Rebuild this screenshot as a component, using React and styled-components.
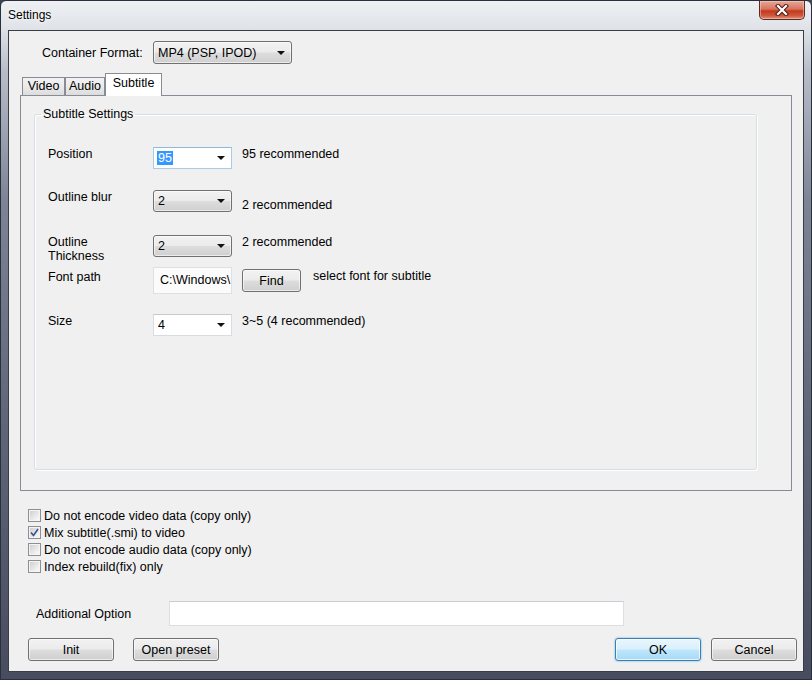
import React from 'react';
import styled, { createGlobalStyle, css } from 'styled-components';

const GlobalStyle = createGlobalStyle`
  html, body {
    margin: 0;
    padding: 0;
    background: #3d4352;
  }
  body {
    font-family: "Liberation Sans", Arial, sans-serif;
    font-size: 12.5px;
    color: #000;
  }
`;

const Window = styled.div`
  width: 812px;
  height: 680px;
  box-sizing: border-box;
  display: flex;
  flex-direction: column;
  border: 1px solid #2a2f3b;
  border-radius: 6px 6px 0 0;
  background: linear-gradient(
    180deg,
    #eef0f3 0px,
    #dfe3e8 28px,
    #b7bdc8 70px,
    #7d8496 200px,
    #5f6678 420px,
    #474d5e 100%
  );
  overflow: hidden;
`;

const TitleBar = styled.div`
  height: 29px;
  display: flex;
  align-items: flex-start;
  padding-left: 7px;
  flex-shrink: 0;
`;

const Title = styled.div`
  margin-top: 7px;
  font-size: 12px;
  color: #000;
  text-shadow: 0 0 6px #fff, 0 0 3px #fff;
`;

const CloseButton = styled.div`
  margin-left: auto;
  margin-right: 6px;
  width: 46px;
  height: 19px;
  box-sizing: border-box;
  border: 1px solid #5a2a24;
  border-top: none;
  border-radius: 0 0 5px 5px;
  background: linear-gradient(
    180deg,
    #e8a796 0%,
    #d9735d 45%,
    #c2391f 55%,
    #cf5638 80%,
    #e0917c 100%
  );
  box-shadow: inset 0 0 0 1px rgba(255, 220, 210, 0.45);
  display: flex;
  align-items: center;
  justify-content: center;
`;

const Client = styled.div`
  flex: 1;
  margin: 0 7px 7px 7px;
  border: 1px solid #3a3d45;
  background: #f0f0f0;
  display: flex;
  flex-direction: column;
`;

const FormatRow = styled.div`
  display: flex;
  align-items: center;
  margin: 10px 0 0 33px;
`;

const FormatLabel = styled.div`
  width: 111px;
`;

const Combo = styled.div`
  box-sizing: border-box;
  width: ${p => p.$width}px;
  height: ${p => p.$height || 22}px;
  display: flex;
  align-items: center;
  padding-left: 4px;
  ${p =>
    p.$edit
      ? css`
          background: #fff;
          border: 1px solid ${p.$focus ? '#a9cbe8' : '#d8dbe2'};
          border-top-color: ${p.$focus ? '#8fb8db' : '#c6c9d0'};
        `
      : css`
          border: 1px solid #707070;
          border-radius: 3px;
          background: linear-gradient(180deg, #f2f2f2 0%, #ebebeb 48%, #dddddd 52%, #cfcfcf 100%);
          box-shadow: inset 0 0 0 1px rgba(255, 255, 255, 0.6);
        `}
`;

const ComboText = styled.span`
  flex: 1;
  ${p =>
    p.$selected &&
    css`
      flex: none;
      background: #3399ff;
      color: #fff;
      padding: 0 1px;
      margin-left: -1px;
      margin-right: auto;
    `}
`;

const Arrow = styled.span`
  width: 0;
  height: 0;
  margin-right: 6px;
  border-left: 4px solid transparent;
  border-right: 4px solid transparent;
  border-top: 4px solid #111;
`;

const TabStrip = styled.div`
  display: flex;
  align-items: flex-end;
  margin: 9px 0 -1px 13px;
  position: relative;
  z-index: 1;
`;

const Tab = styled.div`
  box-sizing: border-box;
  width: ${p => p.$width}px;
  display: flex;
  align-items: center;
  justify-content: center;
  border: 1px solid #898c95;
  border-bottom: none;
  ${p =>
    p.$active
      ? css`
          height: 23px;
          background: #fff;
          padding-bottom: 4px;
        `
      : css`
          height: 18px;
          margin-bottom: 1px;
          padding-bottom: 1px;
          background: linear-gradient(180deg, #f2f2f2 0%, #ebebeb 50%, #dcdcdc 100%);
        `}
`;

const TabPanel = styled.div`
  height: 396px;
  box-sizing: border-box;
  margin: 0 11px;
  border: 1px solid #898c95;
  background: #f0f0f0;
  display: flex;
  flex-direction: column;
`;

const GroupBox = styled.fieldset`
  flex: 1;
  margin: 11px 34px 20px 13px;
  padding: 0 0 0 13px;
  border: 1px solid #d5dfe5;
  border-radius: 3px;
  box-shadow: inset 1px 1px 0 #fff, 1px 1px 0 #fff;
  min-width: 0;
`;

const Legend = styled.legend`
  margin-left: -7px;
  padding: 0 2px;
  line-height: 15px;
`;

const Row = styled.div`
  display: grid;
  grid-template-columns: 105px 79px auto;
  align-items: start;
  margin-top: ${p => p.$top}px;
`;

const Label = styled.div`
  padding-top: ${p => p.$pad || 0}px;
  line-height: ${p => (p.$clip ? 14 : 15)}px;
  ${p =>
    p.$clip &&
    css`
      width: 80px;
      height: 25px;
      overflow: hidden;
    `}
`;

const Note = styled.div`
  margin-left: ${p => (p.$flush ? 0 : 10)}px;
  padding-top: ${p => p.$pad || 0}px;
  line-height: 15px;
  white-space: nowrap;
`;

const PathBox = styled.div`
  box-sizing: border-box;
  height: 27px;
  width: 79px;
  background: #fbfbfb;
  border: 1px solid #dfe0e4;
  padding: 5px 0 0 6px;
  overflow: hidden;
  white-space: nowrap;
`;

const FindCell = styled.div`
  display: flex;
  align-items: flex-start;
  gap: 12px;
  margin-left: 10px;
`;

const Button = styled.button`
  box-sizing: border-box;
  width: ${p => p.$width || 86}px;
  height: ${p => p.$height || 23}px;
  margin-top: ${p => p.$top || 0}px;
  margin-left: ${p => p.$left || 0}px;
  padding: 0;
  font-family: inherit;
  font-size: 12.5px;
  color: #000;
  border-radius: 3px;
  ${p =>
    p.$default
      ? css`
          border: 1px solid #3c7fb1;
          background: linear-gradient(180deg, #eaf6fd 0%, #d9f0fc 48%, #bee6fd 52%, #a7d9f5 100%);
          box-shadow: inset 0 0 0 1px rgba(255, 255, 255, 0.7), 0 0 2px #48a8e0;
        `
      : css`
          border: 1px solid #707070;
          background: linear-gradient(180deg, #f2f2f2 0%, #ebebeb 48%, #dddddd 52%, #cfcfcf 100%);
          box-shadow: inset 0 0 0 1px rgba(255, 255, 255, 0.6);
        `}
`;

const Checks = styled.div`
  display: flex;
  flex-direction: column;
  margin: 16px 0 0 19px;
`;

const CheckRow = styled.div`
  display: flex;
  align-items: center;
  gap: 3px;
  height: 17px;
`;

const Box = styled.span`
  box-sizing: border-box;
  width: 13px;
  height: 13px;
  border: 1px solid #8e8f8f;
  background: linear-gradient(135deg, #cbcbcb 0%, #f0f0f0 70%, #fafafa 100%);
  box-shadow: inset 0 0 0 1px #f4f4f4;
  display: flex;
  align-items: center;
  justify-content: center;
`;

const OptionRow = styled.div`
  display: flex;
  align-items: center;
  margin: 26px 0 0 27px;
`;

const OptionLabel = styled.div`
  width: 133px;
`;

const OptionInput = styled.div`
  box-sizing: border-box;
  width: 455px;
  height: 25px;
  background: #fff;
  border: 1px solid #dcdee3;
  border-top-color: #c9ccd3;
`;

const ButtonRow = styled.div`
  display: flex;
  align-items: center;
  margin: 12px 6px 0 19px;
`;

const Spacer = styled.div`
  flex: 1;
`;

const CloseGlyph = () => (
  <svg width="14" height="12" viewBox="0 0 14 12">
    <path d="M3 2 L11 10 M11 2 L3 10" stroke="#4a1c16" strokeWidth="4.2" strokeLinecap="square" />
    <path d="M3 2 L11 10 M11 2 L3 10" stroke="#fff" strokeWidth="2.2" strokeLinecap="square" />
  </svg>
);

const Checkbox = ({ checked, label }) => (
  <CheckRow>
    <Box>
      {checked && (
        <svg width="9" height="9" viewBox="0 0 9 9">
          <path d="M1 4.5 L3.5 7.5 L8 1" fill="none" stroke="#3b4f93" strokeWidth="1.6" />
        </svg>
      )}
    </Box>
    <span>{label}</span>
  </CheckRow>
);

export default function App() {
  return (
    <>
      <GlobalStyle />
      <Window>
        <TitleBar>
          <Title>Settings</Title>
          <CloseButton>
            <CloseGlyph />
          </CloseButton>
        </TitleBar>
        <Client>
          <FormatRow>
            <FormatLabel>Container Format:</FormatLabel>
            <Combo $width={139} $height={23}>
              <ComboText>MP4 (PSP, IPOD)</ComboText>
              <Arrow />
            </Combo>
          </FormatRow>

          <TabStrip>
            <Tab $width={43}>Video</Tab>
            <Tab $width={40}>Audio</Tab>
            <Tab $width={57} $active>Subtitle</Tab>
          </TabStrip>
          <TabPanel>
            <GroupBox>
              <Legend>Subtitle Settings</Legend>
              <Row $top={25}>
                <Label>Position</Label>
                <Combo $width={79} $edit $focus>
                  <ComboText $selected>95</ComboText>
                  <Arrow />
                </Combo>
                <Note>95 recommended</Note>
              </Row>
              <Row $top={21}>
                <Label>Outline blur</Label>
                <Combo $width={79}>
                  <ComboText>2</ComboText>
                  <Arrow />
                </Combo>
                <Note $pad={8}>2 recommended</Note>
              </Row>
              <Row $top={22}>
                <Label $clip>Outline Thickness</Label>
                <Combo $width={79}>
                  <ComboText>2</ComboText>
                  <Arrow />
                </Combo>
                <Note>2 recommended</Note>
              </Row>
              <Row $top={7}>
                <Label $pad={3}>Font path</Label>
                <PathBox>C:\Windows\</PathBox>
                <FindCell>
                  <Button $width={59} $height={23} $top={2}>Find</Button>
                  <Note $flush $pad={2}>select font for subtitle</Note>
                </FindCell>
              </Row>
              <Row $top={20}>
                <Label>Size</Label>
                <Combo $width={79} $edit>
                  <ComboText>4</ComboText>
                  <Arrow />
                </Combo>
                <Note>3~5 (4 recommended)</Note>
              </Row>
            </GroupBox>
          </TabPanel>

          <Checks>
            <Checkbox label="Do not encode video data (copy only)" />
            <Checkbox checked label="Mix subtitle(.smi) to video" />
            <Checkbox label="Do not encode audio data (copy only)" />
            <Checkbox label="Index rebuild(fix) only" />
          </Checks>

          <OptionRow>
            <OptionLabel>Additional Option</OptionLabel>
            <OptionInput />
          </OptionRow>

          <ButtonRow>
            <Button>Init</Button>
            <Button $left={19}>Open preset</Button>
            <Spacer />
            <Button $default>OK</Button>
            <Button $left={10}>Cancel</Button>
          </ButtonRow>
        </Client>
      </Window>
    </>
  );
}
